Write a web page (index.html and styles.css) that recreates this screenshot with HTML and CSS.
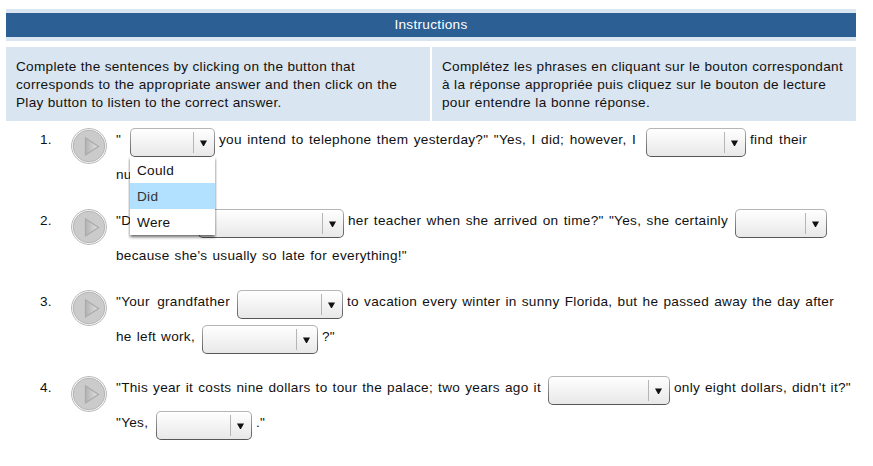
FILE: index.html
```html
<!DOCTYPE html>
<html lang="en">
<head>
<meta charset="utf-8">
<title>Instructions</title>
<link rel="stylesheet" href="styles.css">
</head>
<body>
<svg class="defs" aria-hidden="true">
  <defs>
    <linearGradient id="tri" x1="0" x2="1" y1="0" y2="0"><stop offset="0" stop-color="#b2b2b2"/><stop offset="1" stop-color="#e2e2e2"/></linearGradient>
    <symbol id="play" viewBox="0 0 36 36">
      <circle cx="18" cy="18" r="17.4" fill="#fff" stroke="#b4b4b4" stroke-width="1"/>
      <circle cx="18" cy="18" r="15.8" fill="#cbcbcb" stroke="#b5b5b5" stroke-width="1"/>
      <path d="M14.5 9.8V27L27.5 18.4Z" fill="url(#tri)" stroke="#aaa" stroke-width="1.2"/>
    </symbol>
  </defs>
</svg>
<header class="title"><h1>Instructions</h1></header>
<section class="intro">
  <div class="panel english">
    <p class="e1">Complete the sentences by clicking on the button that</p>
    <p class="e2">corresponds to the appropriate answer and then click on the</p>
    <p class="e3">Play button to listen to the correct answer.</p>
  </div>
  <div class="panel french" lang="fr">
    <p class="f1">Complétez les phrases en cliquant sur le bouton correspondant</p>
    <p class="f2">à la réponse appropriée puis cliquez sur le bouton de lecture</p>
    <p class="f3">pour entendre la bonne réponse.</p>
  </div>
</section>
<main class="questions">
  <article class="question">
    <span class="number">1.</span>
    <svg class="play"><use href="#play"/></svg>
    <div class="lines">
      <div class="line">
        <span class="text q1-open">"</span>
        <div class="select q1-select-a">
          <ul class="menu"><li>Could</li><li class="active">Did</li><li>Were</li></ul>
        </div>
        <span class="text q1-a">you intend to telephone them yesterday?" "Yes, I did; however, I</span>
        <div class="select q1-select-b"></div>
        <span class="text q1-b">find their</span>
      </div>
      <div class="line"><span class="text">nu</span></div>
    </div>
  </article>
  <article class="question">
    <span class="number">2.</span>
    <svg class="play"><use href="#play"/></svg>
    <div class="lines">
      <div class="line">
        <span class="text q2-open">"D</span>
        <div class="select q2-select-a"></div>
        <span class="text q2-a">her teacher when she arrived on time?" "Yes, she certainly</span>
        <div class="select q2-select-b"></div>
      </div>
      <div class="line"><span class="text q2-b">because she's usually so late for everything!"</span></div>
    </div>
  </article>
  <article class="question third">
    <span class="number">3.</span>
    <svg class="play"><use href="#play"/></svg>
    <div class="lines">
      <div class="line">
        <span class="text q3-open">"Your grandfather</span>
        <div class="select q3-select-a"></div>
        <span class="text q3-a">to vacation every winter in sunny Florida, but he passed away the day after</span>
      </div>
      <div class="line">
        <span class="text q3-b">he left work,</span>
        <div class="select q3-select-b"></div>
        <span class="text">?"</span>
      </div>
    </div>
  </article>
  <article class="question">
    <span class="number">4.</span>
    <svg class="play"><use href="#play"/></svg>
    <div class="lines">
      <div class="line">
        <span class="text q4-open">"This year it costs nine dollars to tour the palace; two years ago it</span>
        <div class="select q4-select-a"></div>
        <span class="text q4-a">only eight dollars, didn't it?"</span>
      </div>
      <div class="line">
        <span class="text q4-b">"Yes,</span>
        <div class="select q4-select-b"></div>
        <span class="text">."</span>
      </div>
    </div>
  </article>
</main>
</body>
</html>
```
FILE: styles.css
```css
* { box-sizing: border-box; margin: 0; padding: 0; }
body {
  width: 873px; height: 466px; padding: 9px 17px 0 6px; overflow: hidden;
  background: #fff; color: #111;
  font: 13.6px/18px "Liberation Sans", sans-serif; letter-spacing: .3px;
}
.defs { position: absolute; width: 0; height: 0; }
.title { height: 32px; background: #2c5f93; border: solid #d9e5f0; border-width: 4px 0; color: #fff; text-align: center; }
h1 { font-size: 13.6px; font-weight: 400; line-height: 24px; }
.intro { display: flex; gap: 2px; margin-top: 6px; }
.panel { height: 74px; padding: 11px 10px; background: #d9e5f0; }
.panel p { white-space: nowrap; text-align-last: justify; }
.english { width: 424px; }
.french { width: 424px; }
.e1 { width: 339px; }
.e2 { width: 381px; }
.e3 { width: 265px; }
.f1 { width: 401px; }
.f2 { width: 384px; }
.f3 { width: 208px; }
.questions { padding: 7px 0 0 34px; }
.question { display: flex; height: 81px; }
.third { height: 86px; }
.number { width: 31px; line-height: 24px; }
.play { width: 36px; height: 36px; margin-right: 9px; }
.lines { display: flex; flex-direction: column; gap: 6px; }
.line { display: flex; height: 29px; gap: 4px; }
.text { flex: none; line-height: 24px; white-space: nowrap; text-align-last: justify; }
.select {
  position: relative; flex: none; height: 29px; border: 1px solid transparent; border-radius: 5px;
  background: linear-gradient(#fff, #e8e8e8) padding-box, linear-gradient(#b5b7b9, #555) border-box;
}
.select::before { content: ""; position: absolute; right: 20px; top: 3px; width: 1px; height: 21px; background: #b3b5b7; }
.select::after { content: ""; position: absolute; right: 7px; top: 11px; width: 7px; height: 6px; background: #111; clip-path: polygon(0 8%, 100% 8%, 56% 100%, 44% 100%); }
.menu {
  position: absolute; z-index: 2; top: 28px; left: -1px; width: 85px;
  background: #fff; list-style: none; box-shadow: 0 2px 3px rgba(0,0,0,.6); clip-path: inset(0 -2px -5px -2px);
}
.menu li { height: 26px; padding-left: 7px; line-height: 28px; }
.menu .active { background: #b2e1ff; color: #333; }
.q1-open { width: 10px; }
.q1-select-a { width: 85px; }
.q1-a { width: 417px; margin-right: 6px; }
.q1-select-b { width: 100px; }
.q1-b { width: 57px; }
.q2-open { width: 78px; text-align-last: left; }
.q2-select-a { width: 146px; }
.q2-a { width: 380px; margin-right: 3px; }
.q2-select-b { width: 92px; }
.q2-b { width: 291px; }
.q3-open { width: 114px; margin-right: 3px; }
.q3-select-a { width: 106px; }
.q3-a { width: 487px; }
.q3-b { width: 79px; margin-right: 3px; }
.q3-select-b { width: 116px; }
.q4-open { width: 425px; margin-right: 3px; }
.q4-select-a { width: 122px; }
.q4-a { width: 177px; }
.q4-b { width: 33px; margin-right: 3px; }
.q4-select-b { width: 96px; }
```
